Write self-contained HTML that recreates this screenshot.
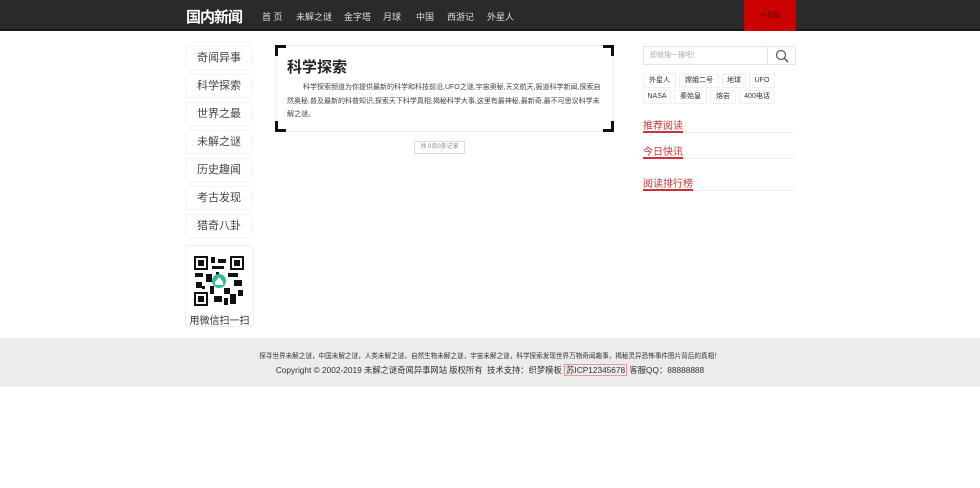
<!DOCTYPE html>
<html><head><meta charset="utf-8"><style>
*{margin:0;padding:0;box-sizing:border-box}
body{width:980px;height:488px;background:#fff;font-family:"Liberation Sans","Noto Sans CJK SC",sans-serif;color:#333;position:relative;overflow:hidden}
.abs{position:absolute}
.nav{left:0;top:0;width:980px;height:31px;background:#2a2a2a;border-bottom:2px solid #1a1a1a}
.logo{left:186px;top:6px;color:#fff;font-weight:bold;font-size:15px;letter-spacing:-1px}
.nav a{position:absolute;top:10px;color:#ddd;font-size:9px;text-decoration:none}
.red{left:744px;top:0;width:52px;height:31px;background:#c00;color:#600;font-size:7px;text-align:center;line-height:31px}
.side{left:185px;width:68px;height:24px;border:1px solid #f3f3f3;border-radius:5px;text-align:center;font-size:11px;line-height:22px;color:#444}
.qr{left:185px;top:245px;width:69px;height:82px;border:1px solid #eee;border-radius:4px}
.main{left:275px;top:45px;width:339px;height:87px;border:1px solid #f0f0f0}
.c{position:absolute;width:11px;height:11px;border-color:#111;border-style:solid}
.tag{position:absolute;height:14px;border:1px solid #f0f0f0;font-size:7px;line-height:12px;text-align:center;color:#333}
.sec{left:643px;width:153px;border-bottom:1px solid #f0f0f0;font-size:10px;color:#c33;height:16px}
.sec span{display:inline-block;border-bottom:2px solid #c33;height:16px}
.foot{left:0;top:338px;width:980px;height:49px;background:#ececec}
</style></head><body>
<div class="abs nav">
<div class="abs logo">国内新闻</div>
<a style="left:262px">首 页</a><a style="left:296px">未解之谜</a><a style="left:344px">金字塔</a><a style="left:383px">月球</a><a style="left:416px">中国</a><a style="left:447px">西游记</a><a style="left:487px">外星人</a>
<div class="abs red">手机版</div>
</div>
<div class="abs side" style="top:46px">奇闻异事</div>
<div class="abs side" style="top:74px">科学探索</div>
<div class="abs side" style="top:102px">世界之最</div>
<div class="abs side" style="top:130px">未解之谜</div>
<div class="abs side" style="top:158px">历史趣闻</div>
<div class="abs side" style="top:186px">考古发现</div>
<div class="abs side" style="top:214px">猎奇八卦</div>
<div class="abs qr">
<svg class="abs" style="left:8px;top:10px" width="50" height="50" viewBox="0 0 50 50">
<rect width="50" height="50" fill="#fff"/>
<g fill="#111"><rect x="0" y="0" width="14" height="14"/><rect x="36" y="0" width="14" height="14"/><rect x="0" y="36" width="14" height="14"/></g>
<g fill="#fff"><rect x="2" y="2" width="10" height="10"/><rect x="38" y="2" width="10" height="10"/><rect x="2" y="38" width="10" height="10"/></g>
<g fill="#111"><rect x="4" y="4" width="6" height="6"/><rect x="40" y="4" width="6" height="6"/><rect x="4" y="40" width="6" height="6"/>
<rect x="17" y="1" width="4" height="6"/><rect x="24" y="3" width="8" height="4"/><rect x="18" y="10" width="12" height="3"/><rect x="1" y="17" width="8" height="4"/><rect x="12" y="18" width="6" height="8"/><rect x="34" y="17" width="10" height="4"/><rect x="40" y="24" width="8" height="6"/><rect x="2" y="26" width="6" height="6"/><rect x="16" y="30" width="4" height="8"/><rect x="30" y="32" width="6" height="6"/><rect x="20" y="40" width="8" height="6"/><rect x="36" y="38" width="6" height="10"/><rect x="44" y="34" width="5" height="6"/><rect x="30" y="42" width="4" height="7"/><rect x="22" y="16" width="3" height="3"/><rect x="27" y="27" width="3" height="3"/><rect x="8" y="30" width="3" height="3"/></g>
<circle cx="25" cy="25" r="7" fill="#3b9"/><path d="M21 26 L25 21 L29 26 V29 H21Z" fill="#fff"/>
</svg>
<div class="abs" style="left:0;top:66px;width:67px;text-align:center;font-size:10px">用微信扫一扫</div>
</div>
<div class="abs main">
<div class="c" style="left:-1px;top:-1px;border-width:3px 0 0 3px"></div>
<div class="c" style="right:-1px;top:-1px;border-width:3px 3px 0 0"></div>
<div class="c" style="left:-1px;bottom:-1px;border-width:0 0 3px 3px"></div>
<div class="c" style="right:-1px;bottom:-1px;border-width:0 3px 3px 0"></div>
<div class="abs" style="left:11px;top:10px;font-size:15px;font-weight:bold;color:#222">科学探索</div>
<div class="abs" style="left:11px;top:35px;width:316px;font-size:7px;line-height:13.5px;color:#444;text-indent:16px">科学探索频道为你提供最新的科学和科技前沿,UFO之谜,宇宙奥秘,天文航天,报道科学新闻,探索自然奥秘,普及最新的科普知识,探索天下科学真相,揭秘科学大事,这里有最神秘,最新奇,最不可思议科学未解之谜。</div>
</div>
<div class="abs" style="left:414px;top:141px;width:51px;height:13px;border:1px solid #ddd;font-size:6px;line-height:11px;text-align:center;color:#888">共 0页0条记录</div>
<div class="abs" style="left:643px;top:46px;width:153px;height:19px;border:1px solid #e5e5e5;font-size:7px;line-height:17px;color:#aaa;padding-left:6px">即就搜一搜吧！
<div class="abs" style="left:123px;top:0;width:1px;height:17px;background:#e5e5e5"></div>
<svg class="abs" style="left:131px;top:2px" width="14" height="14" viewBox="0 0 14 14"><circle cx="6" cy="6" r="4.5" fill="none" stroke="#555" stroke-width="1.2"/><path d="M9.3 9.3 L13 13" stroke="#555" stroke-width="1.4"/></svg>
</div>
<div class="tag" style="left:643px;top:74px;width:33px">外星人</div>
<div class="tag" style="left:679px;top:74px;width:40px">嫦娥二号</div>
<div class="tag" style="left:722px;top:74px;width:24px">地球</div>
<div class="tag" style="left:749px;top:74px;width:26px">UFO</div>
<div class="tag" style="left:643px;top:90px;width:28px">NASA</div>
<div class="tag" style="left:674px;top:90px;width:33px">秦始皇</div>
<div class="tag" style="left:710px;top:90px;width:26px">熔岩</div>
<div class="tag" style="left:739px;top:90px;width:36px">400电话</div>
<div class="abs sec" style="top:117px"><span>推荐阅读</span></div>
<div class="abs sec" style="top:143px"><span>今日快讯</span></div>
<div class="abs sec" style="top:175px"><span>阅读排行榜</span></div>
<div class="abs foot">
<div class="abs" style="left:0;top:12px;width:980px;text-align:center;font-size:6.6px;color:#333">探寻世界未解之谜，中国未解之谜，人类未解之谜，自然生物未解之谜，宇宙未解之谜，科学探索发现世界万物奇闻趣事，揭秘灵异恐怖事件图片背后的真相！</div>
<div class="abs" style="left:0;top:26px;width:980px;text-align:center;font-size:8.3px;color:#333">Copyright © 2002-2019 未解之谜奇闻异事网站 版权所有 &nbsp;技术支持：织梦模板 <span style="border:1px solid #e99;padding:0 1px">苏ICP12345678</span> 客服QQ：88888888</div>
</div>
</body></html>
